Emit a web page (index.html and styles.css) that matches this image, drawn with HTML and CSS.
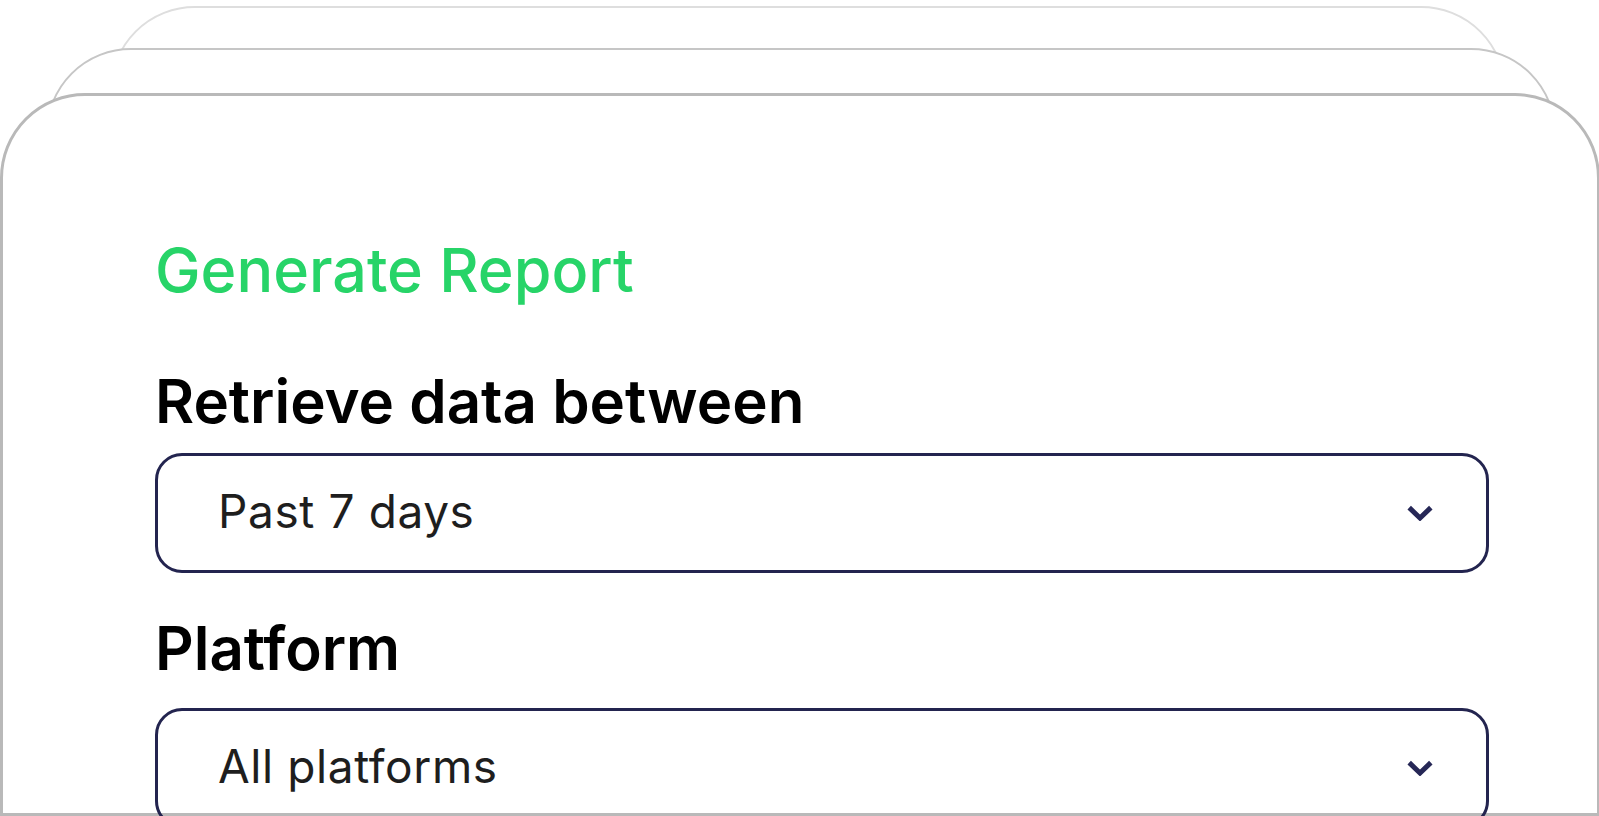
FILE: index.html
```html
<!DOCTYPE html>
<html lang="en">
<head>
<meta charset="utf-8">
<title>Generate Report</title>
<link rel="stylesheet" href="styles.css">
</head>
<body>
<div class="stack">
  <div class="card card-back"></div>
  <div class="card card-mid"></div>
  <section class="card card-front">
    <h1 class="title">Generate Report</h1>
    <div class="field field-range">
      <label class="label">Retrieve data between</label>
      <div class="select">
        <span class="select-value">Past 7 days</span>
        <svg class="chevron" viewBox="0 0 26 16" width="26" height="16" aria-hidden="true"><path d="M2.2 2.6 L13 13 L23.8 2.6" fill="none" stroke="#262756" stroke-width="5" stroke-linecap="butt" stroke-linejoin="miter"/></svg>
      </div>
    </div>
    <div class="field field-platform">
      <label class="label">Platform</label>
      <div class="select">
        <span class="select-value">All platforms</span>
        <svg class="chevron" viewBox="0 0 26 16" width="26" height="16" aria-hidden="true"><path d="M2.2 2.6 L13 13 L23.8 2.6" fill="none" stroke="#262756" stroke-width="5" stroke-linecap="butt" stroke-linejoin="miter"/></svg>
      </div>
    </div>
  </section>
</div>
</body>
</html>
```

FILE: styles.css
```css
html, body {
  margin: 0;
  padding: 0;
  background: #ffffff;
  overflow: hidden;
}

.stack {
  display: grid;
  height: 816px;
  width: 1599px;
}

.card {
  grid-area: 1 / 1;
  background: #ffffff;
  box-sizing: border-box;
  border-radius: 85px 85px 0 0;
}

.card-back {
  margin: 6px 94px 0 110px;
  border: 2.5px solid #dedede;
}

.card-mid {
  margin: 48px 44px 0 46px;
  border: 2.5px solid #c6c6c6;
}

.card-front {
  margin-top: 93px;
  height: 723px;
  border: 3px solid #b9b9b9;
  padding: 142px 108px 0 152px;
  font-family: Inter, "Noto Sans", sans-serif;
}

.title {
  margin: 0;
  font-size: 61px;
  line-height: 64px;
  font-weight: 500;
  color: #27d468;
  letter-spacing: 0;
}

.field {
  display: flex;
  flex-direction: column;
}

.field-range {
  margin-top: 67px;
  gap: 20px;
}

.field-platform {
  margin-top: 43px;
  gap: 28px;
}

.label {
  font-size: 60px;
  line-height: 64px;
  font-weight: 600;
  color: #000000;
}

.select {
  box-sizing: border-box;
  height: 120px;
  width: 1334px;
  border: 3px solid #23244f;
  border-radius: 27px;
  display: flex;
  align-items: center;
  justify-content: space-between;
  padding: 0 53px 4px 60px;
}

.select-value {
  font-size: 46px;
  line-height: 48px;
  font-weight: 400;
  letter-spacing: 0.6px;
  color: #1e1e1e;
}

.chevron {
  display: block;
  flex: none;
  margin-top: 4px;
}
```
